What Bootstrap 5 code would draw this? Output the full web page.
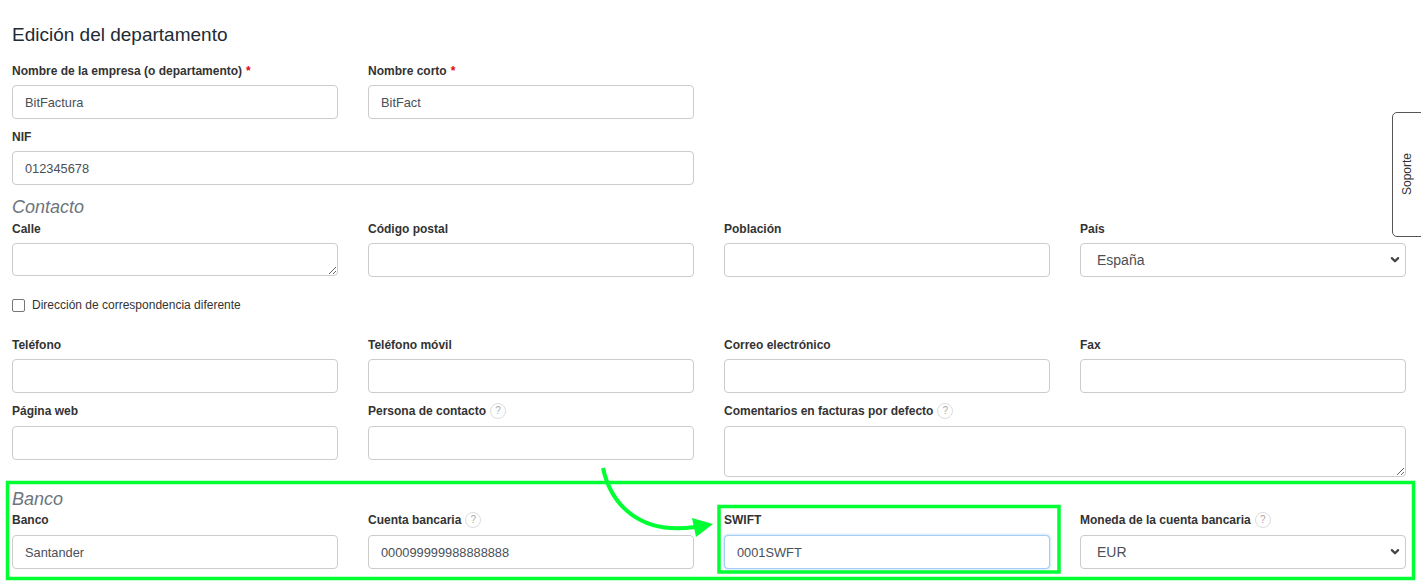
<!DOCTYPE html>
<html>

<head>
  <meta charset="utf-8">
  <meta name="viewport" content="width=device-width">
  <title>Edición del departamento</title>
  <link href="https://cdn.jsdelivr.net/npm/bootstrap@5.3.2/dist/css/bootstrap.min.css" rel="stylesheet" />
  <style>
    body {
      font-family: "Liberation Sans", Arial, sans-serif;
      font-size: 13px;
      color: #333;
      background: #fff;
      overflow: hidden;
    }

    .page-wrap {
      position: relative;
      height: 583px;
      padding: 24px 15px 0 12px;
    }

    .page-title {
      font-size: 19px;
      line-height: 22px;
      font-weight: 400;
      color: #212b36;
      margin: 0 0 16px;
    }

    .form-grid {
      --bs-gutter-x: 30px;
      --bs-gutter-y: 0;
      margin-bottom: 9px;
    }

    .field-label {
      display: flex;
      align-items: center;
      gap: 4px;
      height: 18px;
      margin: 0 0 5px;
      font-size: 12px;
      font-weight: 700;
      color: #333;
      white-space: nowrap;
    }

    .field-label.with-help {
      margin-bottom: 6px;
    }

    .req {
      color: #e30613;
    }

    .help-dot {
      display: inline-block;
      width: 16px;
      height: 16px;
      line-height: 14px;
      border: 1px solid #ddd;
      border-radius: 50%;
      font-size: 10px;
      font-weight: 400;
      text-align: center;
      color: #aaa;
    }

    .form-control.field-box,
    .form-select.field-box {
      height: 34px;
      min-height: 0;
      padding: 0 12px;
      border: 1px solid #ccc;
      border-radius: 4px;
      font-size: 12.8px;
      color: #495057;
      box-shadow: none;
    }

    .form-select.field-box {
      padding: 1px 24px 0 16px;
      font-size: 14px;
      background-image: url("data:image/svg+xml,%3csvg xmlns='http://www.w3.org/2000/svg' viewBox='0 0 16 16'%3e%3cpath fill='none' stroke='%23444' stroke-width='3.5' stroke-linecap='round' stroke-linejoin='round' d='m3 5 5 5 5-5'/%3e%3c/svg%3e");
      background-position: right 5px center;
      background-size: 10px 10px;
    }

    textarea.form-control.field-box {
      height: 33px;
      padding: 6px 12px;
    }

    textarea.form-control.field-note {
      height: 51px;
    }

    .form-control.field-focus {
      border-color: #a6cdf6;
      box-shadow: 0 0 3px rgba(120, 185, 245, .7);
    }

    .section-title {
      height: 26px;
      line-height: 26px;
      margin: 0;
      font-size: 18px;
      font-style: italic;
      font-weight: 400;
      color: #6c757d;
    }

    .section-bank {
      margin-top: 9px;
      height: 25px;
    }

    .check-line {
      height: 18px;
      margin: 19px 0 22px;
      font-size: 12px;
      color: #333;
      gap: 7px;
    }

    .check-line .form-check-input {
      width: 13px;
      height: 13px;
      margin: 0;
      border-color: #767676;
      border-radius: 2px;
    }

    .support-tab {
      position: absolute;
      top: 112px;
      right: -6px;
      width: 35px;
      height: 125px;
      border: 1px solid #555;
      border-radius: 5px;
      background: #fff;
      font-size: 12px;
      color: #333;
    }

    .support-tab span {
      writing-mode: vertical-rl;
      transform: rotate(180deg);
      margin-right: 6px;
    }

    .mark-layer {
      position: absolute;
      top: 0;
      left: 0;
      pointer-events: none;
    }
  </style>
  <script src="https://cdn.jsdelivr.net/npm/bootstrap@5.3.2/dist/js/bootstrap.bundle.min.js"></script>
</head>

<body>
  <main class="page-wrap">
    <h1 class="page-title">Edición del departamento</h1>

    <div class="row form-grid">
      <div class="col-3">
        <label class="field-label">Nombre de la empresa (o departamento) <span class="req">*</span></label>
        <input class="form-control field-box" type="text" value="BitFactura">
      </div>
      <div class="col-3">
        <label class="field-label">Nombre corto <span class="req">*</span></label>
        <input class="form-control field-box" type="text" value="BitFact">
      </div>
    </div>

    <div class="row form-grid">
      <div class="col-6">
        <label class="field-label">NIF</label>
        <input class="form-control field-box" type="text" value="012345678">
      </div>
    </div>

    <h2 class="section-title">Contacto</h2>
    <div class="row form-grid mb-0">
      <div class="col-3">
        <label class="field-label">Calle</label>
        <textarea class="form-control field-box"></textarea>
      </div>
      <div class="col-3">
        <label class="field-label">Código postal</label>
        <input class="form-control field-box" type="text">
      </div>
      <div class="col-3">
        <label class="field-label">Población</label>
        <input class="form-control field-box" type="text">
      </div>
      <div class="col-3">
        <label class="field-label">País</label>
        <select class="form-select field-box">
          <option>España</option>
        </select>
      </div>
    </div>

    <div class="check-line d-flex align-items-center">
      <input class="form-check-input" type="checkbox">
      <span>Dirección de correspondencia diferente</span>
    </div>

    <div class="row form-grid">
      <div class="col-3">
        <label class="field-label">Teléfono</label>
        <input class="form-control field-box" type="text">
      </div>
      <div class="col-3">
        <label class="field-label">Teléfono móvil</label>
        <input class="form-control field-box" type="text">
      </div>
      <div class="col-3">
        <label class="field-label">Correo electrónico</label>
        <input class="form-control field-box" type="text">
      </div>
      <div class="col-3">
        <label class="field-label">Fax</label>
        <input class="form-control field-box" type="text">
      </div>
    </div>

    <div class="row form-grid mb-0">
      <div class="col-3">
        <label class="field-label with-help">Página web</label>
        <input class="form-control field-box" type="text">
      </div>
      <div class="col-3">
        <label class="field-label with-help">Persona de contacto <span class="help-dot">?</span></label>
        <input class="form-control field-box" type="text">
      </div>
      <div class="col-6">
        <label class="field-label with-help">Comentarios en facturas por defecto <span class="help-dot">?</span></label>
        <textarea class="form-control field-box field-note"></textarea>
      </div>
    </div>

    <h2 class="section-title section-bank">Banco</h2>
    <div class="row form-grid mb-0">
      <div class="col-3">
        <label class="field-label with-help">Banco</label>
        <input class="form-control field-box" type="text" value="Santander">
      </div>
      <div class="col-3">
        <label class="field-label with-help">Cuenta bancaria <span class="help-dot">?</span></label>
        <input class="form-control field-box" type="text" value="000099999988888888">
      </div>
      <div class="col-3">
        <label class="field-label with-help">SWIFT</label>
        <input class="form-control field-box field-focus" type="text" value="0001SWFT">
      </div>
      <div class="col-3">
        <label class="field-label with-help">Moneda de la cuenta bancaria <span class="help-dot">?</span></label>
        <select class="form-select field-box">
          <option>EUR</option>
        </select>
      </div>
    </div>

    <div class="support-tab d-flex align-items-center justify-content-center"><span>Soporte</span></div>

    <svg class="mark-layer" width="1421" height="583" viewBox="0 0 1421 583" fill="none">
      <rect x="7.5" y="482.5" width="1406" height="96" stroke="#00ff33" stroke-width="3.5" />
      <rect x="719" y="506.5" width="340" height="65.5" stroke="#00ff33" stroke-width="3.5" />
      <path d="M603 468C611 505 640 535 695 527" stroke="#00ff33" stroke-width="4" />
      <path d="M692 518L713 524L696 537Z" fill="#00ff33" />
    </svg>
  </main>
</body>

</html>
